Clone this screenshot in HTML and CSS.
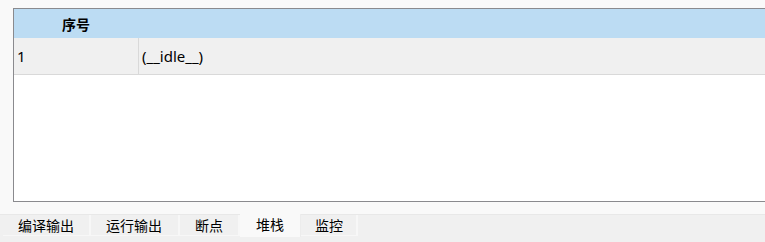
FILE: index.html
```html
<!DOCTYPE html>
<html>
<head>
<meta charset="utf-8">
<link rel="stylesheet" href="styles.css">
</head>
<body>
<div class="page">
  <div class="panel">
    <div class="head">
      <div class="hcell">序号</div>
      <div class="hrest"></div>
    </div>
    <div class="row">
      <div class="cell c1">1</div>
      <div class="cell c2">(__idle__)</div>
    </div>
    <div class="blank"></div>
  </div>
  <div class="gap"></div>
  <div class="tabbar">
    <div class="tab">编译输出</div>
    <div class="tab">运行输出</div>
    <div class="tab">断点</div>
    <div class="tab active">堆栈</div>
    <div class="tab last">监控</div>
  </div>
</div>
</body>
</html>
```
FILE: styles.css
```css
html, body {
  margin: 0;
  padding: 0;
  background: #f9f9f9;
}
body {
  width: 765px;
  height: 242px;
  overflow: hidden;
  font-family: "Noto Sans CJK SC", "Noto Sans", sans-serif;
  font-size: 14px;
  color: #000;
}
.page {
  display: flex;
  flex-direction: column;
  height: 242px;
  padding-top: 8px;
  box-sizing: border-box;
}
.panel {
  margin-left: 13px;
  width: 760px;
  height: 194px;
  box-sizing: border-box;
  border: 1px solid #8a8a8e;
  border-right: none;
  background: #fff;
  display: flex;
  flex-direction: column;
}
.head {
  height: 29px;
  background: #bcdcf3;
  display: flex;
  align-items: center;
}
.hcell {
  width: 124px;
  text-align: center;
  font-weight: bold;
}
.row {
  height: 36px;
  background: #f0f0f0;
  border-bottom: 1px solid #d9d9d9;
  display: flex;
}
.cell {
  display: flex;
  align-items: center;
  line-height: 1;
}
.c1 {
  width: 121px;
  padding-left: 3px;
  border-right: 1px solid #d9d9d9;
  font-family: "Noto Sans", sans-serif;
  font-size: 15px;
}
.c2 {
  padding-left: 3px;
  font-family: "Noto Sans", sans-serif;
  font-size: 15px;
}
.blank {
  flex: 1;
}
.gap {
  height: 12px;
  border-bottom: 1px solid #e8e8e8;
}
.tabbar {
  flex: 1;
  background: #f0f0f0;
  display: flex;
  align-items: flex-start;
  padding-left: 3px;
}
.tab {
  height: 20px;
  line-height: 20px;
  padding: 0 15px;
  background: #f0f0f0;
  border-right: 2px solid #f7f7f7;
  border-bottom: 1px solid #f7f7f7;
  text-align: center;
}
.tab:nth-child(2) {
  padding: 0 16px 0 15px;
}
.tab.active {
  background: #f9f9f9;
  height: 23px;
  margin-top: -1px;
  padding: 0 16px;
  border-bottom: none;
  border-right: 1px solid #ececec;
}
.tab.last {
  padding: 0 13px 0 14px;
}
```
